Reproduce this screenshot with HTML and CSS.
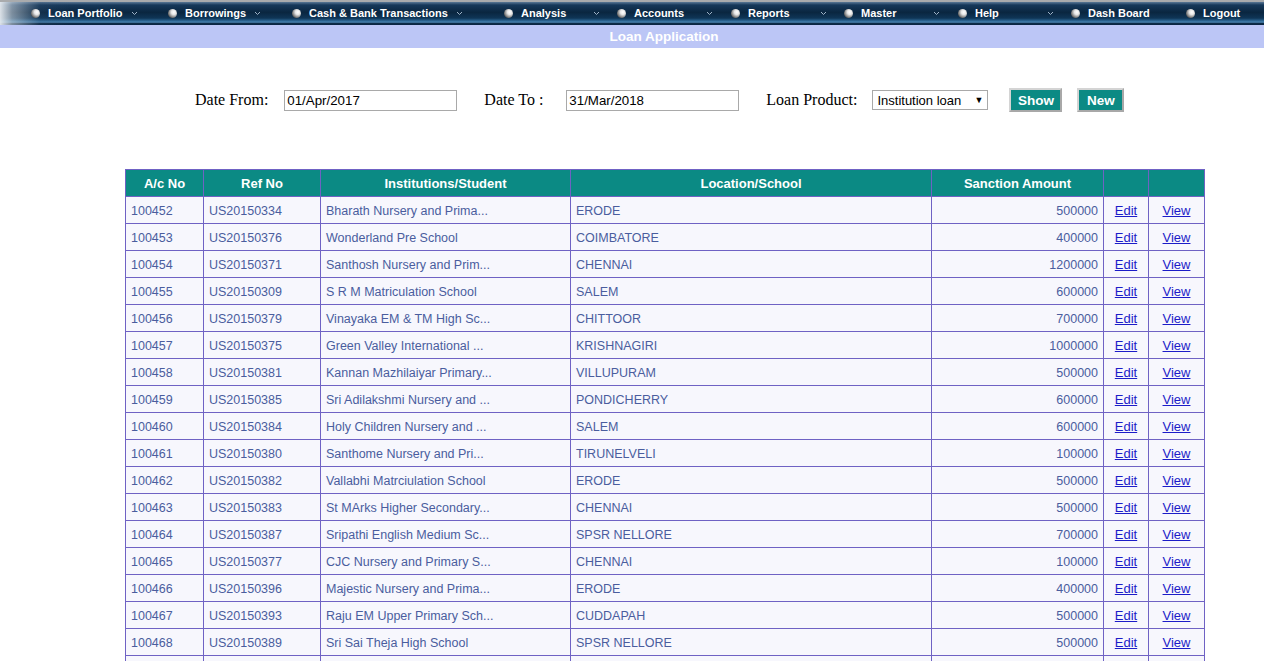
FILE: index.html
```html
<!DOCTYPE html>
<html>
<head>
<meta charset="utf-8">
<title>Loan Application</title>
<link rel="stylesheet" href="styles.css">
</head>
<body>
<nav class="menubar">
  <div class="mi w137"><span class="ball"></span><span class="lbl">Loan Portfolio</span><svg class="chev" viewBox="0 0 7 5"><path d="M1 1l2.5 2.5L6 1" fill="none" stroke="#9fb3c8" stroke-width="1"/></svg></div>
  <div class="mi w124"><span class="ball"></span><span class="lbl">Borrowings</span><svg class="chev" viewBox="0 0 7 5"><path d="M1 1l2.5 2.5L6 1" fill="none" stroke="#9fb3c8" stroke-width="1"/></svg></div>
  <div class="mi w212"><span class="ball"></span><span class="lbl">Cash &amp; Bank Transactions</span><svg class="chev" viewBox="0 0 7 5"><path d="M1 1l2.5 2.5L6 1" fill="none" stroke="#9fb3c8" stroke-width="1"/></svg></div>
  <div class="mi w113"><span class="ball"></span><span class="lbl fix">Analysis</span><svg class="chev" viewBox="0 0 7 5"><path d="M1 1l2.5 2.5L6 1" fill="none" stroke="#9fb3c8" stroke-width="1"/></svg></div>
  <div class="mi w114"><span class="ball"></span><span class="lbl fix">Accounts</span><svg class="chev" viewBox="0 0 7 5"><path d="M1 1l2.5 2.5L6 1" fill="none" stroke="#9fb3c8" stroke-width="1"/></svg></div>
  <div class="mi w113"><span class="ball"></span><span class="lbl fix">Reports</span><svg class="chev" viewBox="0 0 7 5"><path d="M1 1l2.5 2.5L6 1" fill="none" stroke="#9fb3c8" stroke-width="1"/></svg></div>
  <div class="mi w114"><span class="ball"></span><span class="lbl fix">Master</span><svg class="chev" viewBox="0 0 7 5"><path d="M1 1l2.5 2.5L6 1" fill="none" stroke="#9fb3c8" stroke-width="1"/></svg></div>
  <div class="mi w113"><span class="ball"></span><span class="lbl fix">Help</span><svg class="chev" viewBox="0 0 7 5"><path d="M1 1l2.5 2.5L6 1" fill="none" stroke="#9fb3c8" stroke-width="1"/></svg></div>
  <div class="mi w115"><span class="ball"></span><span class="lbl">Dash Board</span></div>
  <div class="mi"><span class="ball"></span><span class="lbl">Logout</span></div>
</nav>
<div class="banner">Loan Application</div>

<div class="filters">
  <label class="flabel">Date From:</label>
  <input class="finput" type="text" value="01/Apr/2017">
  <label class="flabel l2">Date To :</label>
  <input class="finput" type="text" value="31/Mar/2018">
  <label class="flabel l3">Loan Product:</label>
  <div class="fselect"><span>Institution loan</span><span class="arrow">&#9660;</span></div>
  <button class="btn b1">Show</button>
  <button class="btn b2">New</button>
</div>

<table class="grid">
  <thead>
    <tr>
      <th class="c1">A/c No</th><th class="c2">Ref No</th><th class="c3">Institutions/Student</th><th class="c4">Location/School</th><th class="c5">Sanction Amount</th><th class="c6"></th><th class="c7"></th>
    </tr>
  </thead>
  <tbody>
    <tr><td>100452</td><td>US20150334</td><td>Bharath Nursery and Prima...</td><td>ERODE</td><td class="amt">500000</td><td class="lnk"><a href="#">Edit</a></td><td class="lnk"><a href="#">View</a></td></tr>
    <tr><td>100453</td><td>US20150376</td><td>Wonderland Pre School</td><td>COIMBATORE</td><td class="amt">400000</td><td class="lnk"><a href="#">Edit</a></td><td class="lnk"><a href="#">View</a></td></tr>
    <tr><td>100454</td><td>US20150371</td><td>Santhosh Nursery and Prim...</td><td>CHENNAI</td><td class="amt">1200000</td><td class="lnk"><a href="#">Edit</a></td><td class="lnk"><a href="#">View</a></td></tr>
    <tr><td>100455</td><td>US20150309</td><td>S R M Matriculation School</td><td>SALEM</td><td class="amt">600000</td><td class="lnk"><a href="#">Edit</a></td><td class="lnk"><a href="#">View</a></td></tr>
    <tr><td>100456</td><td>US20150379</td><td>Vinayaka EM &amp; TM High Sc...</td><td>CHITTOOR</td><td class="amt">700000</td><td class="lnk"><a href="#">Edit</a></td><td class="lnk"><a href="#">View</a></td></tr>
    <tr><td>100457</td><td>US20150375</td><td>Green Valley International ...</td><td>KRISHNAGIRI</td><td class="amt">1000000</td><td class="lnk"><a href="#">Edit</a></td><td class="lnk"><a href="#">View</a></td></tr>
    <tr><td>100458</td><td>US20150381</td><td>Kannan Mazhilaiyar Primary...</td><td>VILLUPURAM</td><td class="amt">500000</td><td class="lnk"><a href="#">Edit</a></td><td class="lnk"><a href="#">View</a></td></tr>
    <tr><td>100459</td><td>US20150385</td><td>Sri Adilakshmi Nursery and ...</td><td>PONDICHERRY</td><td class="amt">600000</td><td class="lnk"><a href="#">Edit</a></td><td class="lnk"><a href="#">View</a></td></tr>
    <tr><td>100460</td><td>US20150384</td><td>Holy Children Nursery and ...</td><td>SALEM</td><td class="amt">600000</td><td class="lnk"><a href="#">Edit</a></td><td class="lnk"><a href="#">View</a></td></tr>
    <tr><td>100461</td><td>US20150380</td><td>Santhome Nursery and Pri...</td><td>TIRUNELVELI</td><td class="amt">100000</td><td class="lnk"><a href="#">Edit</a></td><td class="lnk"><a href="#">View</a></td></tr>
    <tr><td>100462</td><td>US20150382</td><td>Vallabhi Matrciulation School</td><td>ERODE</td><td class="amt">500000</td><td class="lnk"><a href="#">Edit</a></td><td class="lnk"><a href="#">View</a></td></tr>
    <tr><td>100463</td><td>US20150383</td><td>St MArks Higher Secondary...</td><td>CHENNAI</td><td class="amt">500000</td><td class="lnk"><a href="#">Edit</a></td><td class="lnk"><a href="#">View</a></td></tr>
    <tr><td>100464</td><td>US20150387</td><td>Sripathi English Medium Sc...</td><td>SPSR NELLORE</td><td class="amt">700000</td><td class="lnk"><a href="#">Edit</a></td><td class="lnk"><a href="#">View</a></td></tr>
    <tr><td>100465</td><td>US20150377</td><td>CJC Nursery and Primary S...</td><td>CHENNAI</td><td class="amt">100000</td><td class="lnk"><a href="#">Edit</a></td><td class="lnk"><a href="#">View</a></td></tr>
    <tr><td>100466</td><td>US20150396</td><td>Majestic Nursery and Prima...</td><td>ERODE</td><td class="amt">400000</td><td class="lnk"><a href="#">Edit</a></td><td class="lnk"><a href="#">View</a></td></tr>
    <tr><td>100467</td><td>US20150393</td><td>Raju EM Upper Primary Sch...</td><td>CUDDAPAH</td><td class="amt">500000</td><td class="lnk"><a href="#">Edit</a></td><td class="lnk"><a href="#">View</a></td></tr>
    <tr><td>100468</td><td>US20150389</td><td>Sri Sai Theja High School</td><td>SPSR NELLORE</td><td class="amt">500000</td><td class="lnk"><a href="#">Edit</a></td><td class="lnk"><a href="#">View</a></td></tr>
    <tr class="more"><td></td><td></td><td></td><td></td><td></td><td></td><td></td></tr>
  </tbody>
</table>
</body>
</html>
```

FILE: styles.css
```css
html, body {
  margin: 0;
  padding: 0;
  background: #ffffff;
}
body {
  font-family: "Liberation Sans", Arial, sans-serif;
}

/* ---------- menu bar ---------- */
.menubar {
  display: flex;
  align-items: center;
  height: 25px;
  padding-left: 31px;
  box-sizing: border-box;
  border-top: 2px solid #a9abad;
  background:
    linear-gradient(to right, rgba(230,235,240,0.95) 0, rgba(200,210,220,0.6) 12px, rgba(60,90,120,0.2) 40px, rgba(0,0,0,0) 70px),
    linear-gradient(to bottom, #5a7896 0, #16385a 3px, #0a2640 45%, #0f3556 70%, #2b6592 82%, #4c86b4 88%, #0c2b48 92%, #0a2440 100%);
  overflow: hidden;
  white-space: nowrap;
}
.mi {
  display: flex;
  align-items: center;
  flex: none;
  height: 21px;
}
.w137 { width: 137px; }
.w124 { width: 124px; }
.w212 { width: 212px; }
.w113 { width: 113px; }
.w114 { width: 114px; }
.w115 { width: 115px; }
.ball {
  width: 9px;
  height: 9px;
  border-radius: 50%;
  background: radial-gradient(circle at 65% 35%, #ffffff 0, #e6e6e6 30%, #9a9a9a 55%, #3a3a3a 85%);
  margin-right: 8px;
  flex: none;
}
.lbl {
  color: #ffffff;
  font-family: "Liberation Sans", Arial, sans-serif;
  font-size: 11px;
  font-weight: bold;
  line-height: 21px;
}
.lbl.fix {
  display: inline-block;
  width: 64px;
}
.chev {
  width: 7px;
  height: 5px;
  margin-left: 8px;
  flex: none;
}

/* ---------- banner ---------- */
.banner {
  height: 23px;
  line-height: 23px;
  background: #bcc6f6;
  color: #ffffff;
  text-align: center;
  font-family: "Liberation Sans", Arial, sans-serif;
  font-weight: bold;
  font-size: 13.5px;
  padding-left: 64px;
}

/* ---------- filters ---------- */
.filters {
  display: flex;
  align-items: center;
  padding-left: 195px;
  margin-top: 39px;
  height: 26px;
}
.flabel {
  font-family: "Liberation Serif", "Times New Roman", serif;
  font-size: 16px;
  color: #000;
  margin-right: 16px;
}
.flabel.l2 { margin-left: 27px; margin-right: 23px; }
.flabel.l3 { margin-left: 27px; margin-right: 15px; }
.finput {
  width: 173px;
  height: 21px;
  box-sizing: border-box;
  border: 1px solid #a9a9a9;
  padding: 1px 2px;
  font-family: "Liberation Sans", Arial, sans-serif;
  font-size: 13.3px;
  color: #000;
  margin: 0;
}
.fselect {
  width: 116px;
  height: 20px;
  box-sizing: border-box;
  border: 1px solid #a9a9a9;
  display: flex;
  align-items: center;
  justify-content: space-between;
  padding: 0 4px 0 4px;
  font-family: "Liberation Sans", Arial, sans-serif;
  font-size: 13px;
  color: #000;
}
.fselect .arrow {
  font-size: 9px;
}
.btn {
  height: 24px;
  box-sizing: border-box;
  background: #0b8a84;
  color: #ffffff;
  font-family: "Liberation Sans", Arial, sans-serif;
  font-weight: bold;
  font-size: 13.5px;
  border: 2px solid #d4d4d4;
  border-right-color: #a8a8a8;
  border-bottom-color: #a8a8a8;
  padding: 0 6px;
  margin: 0;
}
.b1 { width: 53px; margin-left: 21px; }
.b2 { width: 47px; margin-left: 15px; }

/* ---------- grid ---------- */
.grid {
  margin-top: 56px;
  margin-left: 125px;
  width: 1079px;
  border-collapse: collapse;
  table-layout: fixed;
  font-family: "Liberation Sans", Arial, sans-serif;
  font-size: 12.5px;
}
.grid th, .grid td {
  border: 1px solid #6f62c4;
  height: 27px;
  padding: 1px 5px 0 5px;
  box-sizing: border-box;
  white-space: nowrap;
  overflow: hidden;
}
.grid th {
  background: #0b8a84;
  color: #ffffff;
  font-weight: bold;
  font-size: 13px;
  text-align: center;
}
.grid td {
  background: #f7f7fd;
  color: #4a5d9e;
  text-align: left;
}
.c1 { width: 78px; }
.c2 { width: 117px; }
.c3 { width: 250px; }
.c4 { width: 361px; }
.c5 { width: 172px; }
.c6 { width: 45px; }
.c7 { width: 56px; }
.grid td.amt { text-align: right; }
.grid td.lnk { text-align: center; }
.grid td.lnk a {
  color: #1c1cc8;
  text-decoration: underline;
  font-size: 13px;
}
```
